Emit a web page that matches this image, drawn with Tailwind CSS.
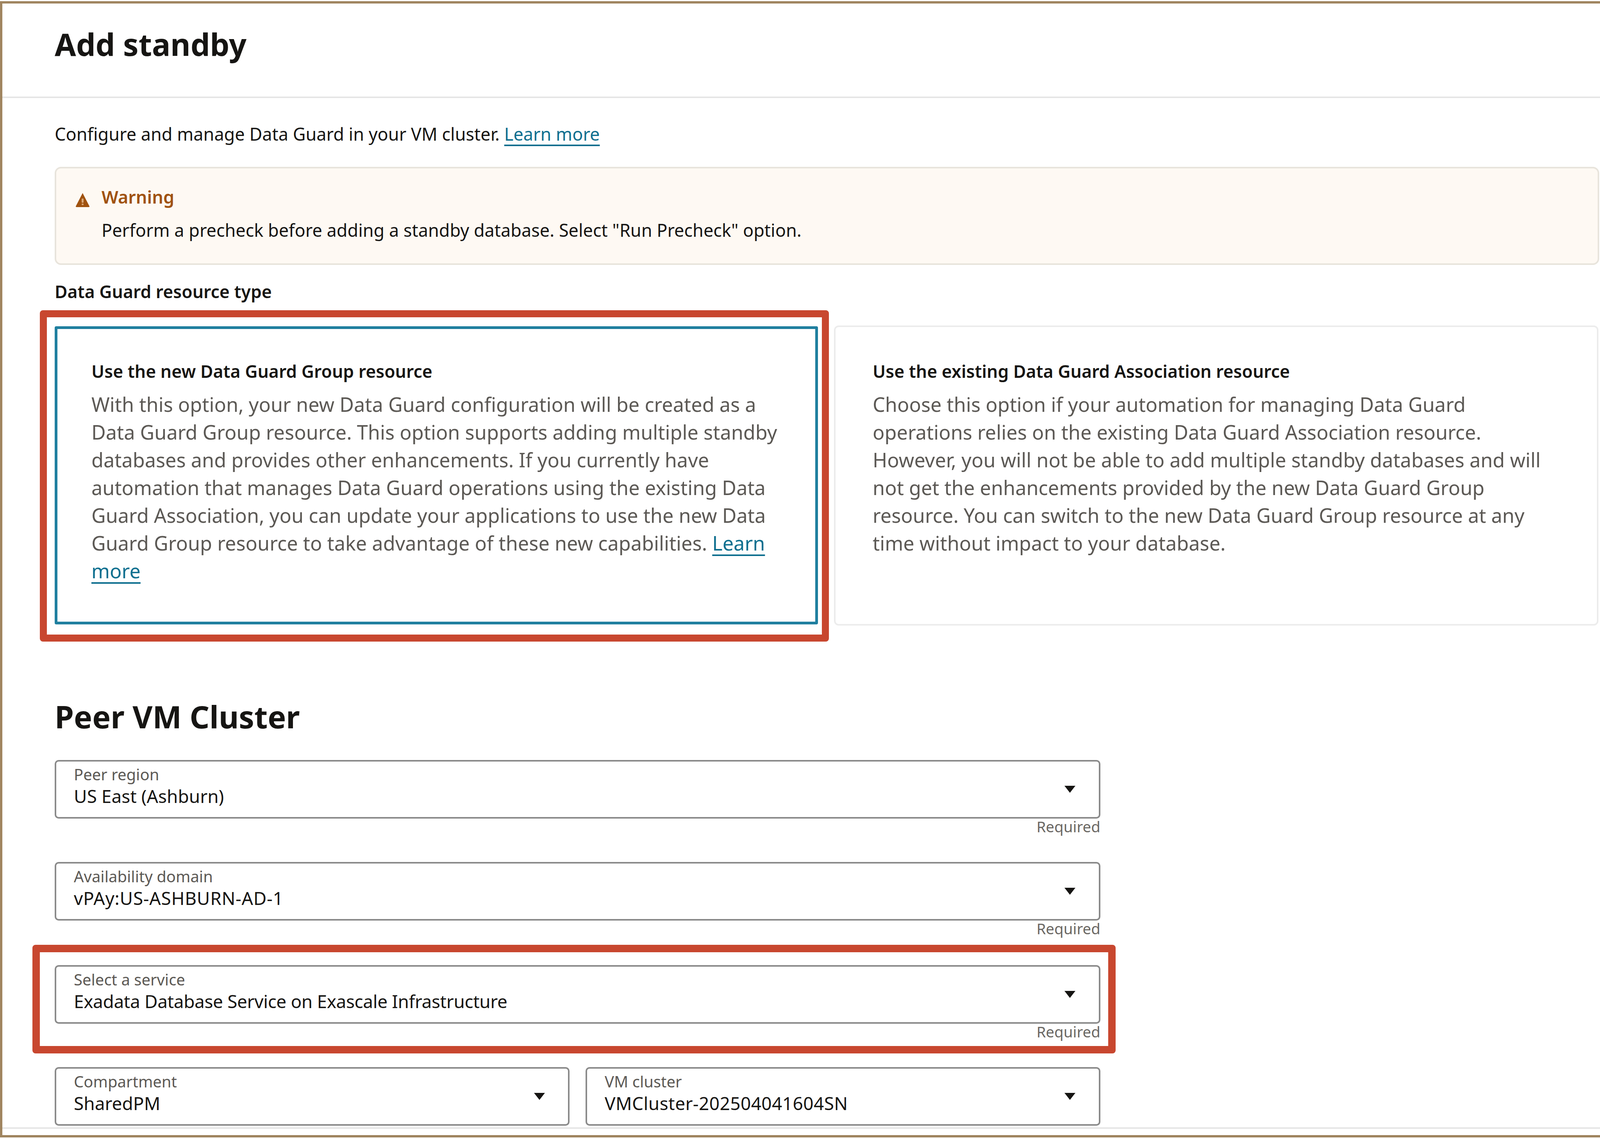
<!DOCTYPE html>
<html lang="en">
<head>
<meta charset="utf-8">
<title>Add standby</title>
<script src="https://cdn.jsdelivr.net/npm/@tailwindcss/browser@4"></script>
</head>
<body class="m-0 bg-white">
<div class="relative w-[4134px] h-[2915px] overflow-hidden bg-white font-['Noto_Sans',sans-serif] text-[#161513]">
  <div class="mt-[3px] w-[4130px] h-[2908px] border-[6px] border-[#a08560] overflow-hidden">
    <header class="h-[242px] pl-[134px] pt-[54px] border-b-[4px] border-[#e6e6e6]">
      <h1 class="text-[79px] leading-[100px] font-bold">Add standby</h1>
    </header>
    <main class="pl-[134px] pr-[30px]">
      <p class="mt-[62px] text-[45px] leading-[60px]">Configure and manage Data Guard in your VM cluster. <a class="text-[#0e6f8f] underline decoration-[4px] underline-offset-[10px]">Learn more</a></p>

      <div class="mt-[54px] h-[251px] w-[3954px] flex gap-[30px] pl-[49px] pt-[43px] border-[4px] border-[#e8e4dc] rounded-[16px] bg-[#fef9f3]">
        <svg class="mt-[19px] w-[37px] h-[37px] shrink-0" viewBox="0 0 37 37"><path d="M18.5 1 L36 35 Q36.5 37 34 37 L3 37 Q0.5 37 1 35 Z" fill="#a0520f"/><rect x="16" y="15" width="5" height="11" rx="2" fill="#d9a878"/><rect x="16" y="28" width="5" height="4" rx="1.5" fill="#d9a878"/></svg>
        <div>
          <div class="text-[45px] leading-[60px] font-semibold text-[#a0520f]">Warning</div>
          <div class="mt-[25px] text-[45px] leading-[60px]">Perform a precheck before adding a standby database. Select "Run Precheck" option.</div>
        </div>
      </div>

      <div class="mt-[38px] text-[44.5px] leading-[60px] font-semibold">Data Guard resource type</div>

      <div class="mt-[57px] flex items-start gap-[41px]">
        <div class="mt-[2px] h-[763px] w-[1954px] border-[7px] border-[#1f7f9f] rounded-[4px] pl-[87px] pt-[78px]">
          <div class="text-[44.5px] leading-[60px] font-semibold">Use the new Data Guard Group resource</div>
          <p class="mt-[19px] text-[50.4px] leading-[71px] text-[#5c5955] whitespace-nowrap">With this option, your new Data Guard configuration will be created as a<br>Data Guard Group resource. This option supports adding multiple standby<br>databases and provides other enhancements. If you currently have<br>automation that manages Data Guard operations using the existing Data<br>Guard Association, you can update your applications to use the new Data<br>Guard Group resource to take advantage of these new capabilities. <a class="text-[#0e6f8f] underline decoration-[4px] underline-offset-[10px]">Learn<br>more</a></p>
        </div>
        <div class="h-[768px] w-[1957px] border-[4px] border-[#ececec] rounded-[12px] pl-[95px] pt-[83px]">
          <div class="text-[44.5px] leading-[60px] font-semibold">Use the existing Data Guard Association resource</div>
          <p class="mt-[19px] text-[50.4px] leading-[71px] text-[#5c5955] whitespace-nowrap">Choose this option if your automation for managing Data Guard<br>operations relies on the existing Data Guard Association resource.<br>However, you will not be able to add multiple standby databases and will<br>not get the enhancements provided by the new Data Guard Group<br>resource. You can switch to the new Data Guard Group resource at any<br>time without impact to your database.</p>
        </div>
      </div>

      <h2 class="mt-[183px] text-[79px] leading-[100px] font-bold">Peer VM Cluster</h2>

      <div class="mt-[61px] w-[2677px]">
        <div class="h-[150px] flex items-center justify-between border-[4px] border-[#8a8a8a] rounded-[10px] pl-[45px] pr-[60px]">
          <div class="self-start pt-[8px]">
            <div class="text-[40px] leading-[50px] text-[#5c5955]">Peer region</div>
            <div class="text-[46px] leading-[60px]">US East (Ashburn)</div>
          </div>
          <svg class="w-[28px] h-[18px]" viewBox="0 0 28 18"><path d="M0 0 H28 L14 18 Z" fill="#161513"/></svg>
        </div>
        <div class="h-[40px] text-right text-[38.5px] leading-[40px] text-[#6b6864]">Required</div>

        <div class="mt-[71px] h-[150px] flex items-center justify-between border-[4px] border-[#8a8a8a] rounded-[10px] pl-[45px] pr-[60px]">
          <div class="self-start pt-[8px]">
            <div class="text-[40px] leading-[50px] text-[#5c5955]">Availability domain</div>
            <div class="text-[46px] leading-[60px] tracking-[0.7px]">vPAy:US-ASHBURN-AD-1</div>
          </div>
          <svg class="w-[28px] h-[18px]" viewBox="0 0 28 18"><path d="M0 0 H28 L14 18 Z" fill="#161513"/></svg>
        </div>
        <div class="h-[40px] text-right text-[38.5px] leading-[40px] text-[#6b6864]">Required</div>

        <div class="mt-[74px] h-[150px] flex items-center justify-between border-[4px] border-[#8a8a8a] rounded-[10px] pl-[45px] pr-[60px]">
          <div class="self-start pt-[8px]">
            <div class="text-[40px] leading-[50px] text-[#5c5955]">Select a service</div>
            <div class="text-[46px] leading-[60px] tracking-[-0.4px]">Exadata Database Service on Exascale Infrastructure</div>
          </div>
          <svg class="w-[28px] h-[18px]" viewBox="0 0 28 18"><path d="M0 0 H28 L14 18 Z" fill="#161513"/></svg>
        </div>
        <div class="h-[40px] text-right text-[38.5px] leading-[40px] text-[#6b6864]">Required</div>

        <div class="mt-[71px] flex gap-[41px]">
          <div class="h-[150px] w-[1318px] flex items-center justify-between border-[4px] border-[#8a8a8a] rounded-[10px] pl-[45px] pr-[59px]">
            <div class="self-start pt-[8px]">
              <div class="text-[40px] leading-[50px] text-[#5c5955]">Compartment</div>
              <div class="text-[46px] leading-[60px]">SharedPM</div>
            </div>
            <svg class="w-[28px] h-[18px]" viewBox="0 0 28 18"><path d="M0 0 H28 L14 18 Z" fill="#161513"/></svg>
          </div>
          <div class="h-[150px] w-[1318px] flex items-center justify-between border-[4px] border-[#8a8a8a] rounded-[10px] pl-[45px] pr-[60px]">
            <div class="self-start pt-[8px]">
              <div class="text-[40px] leading-[50px] text-[#5c5955]">VM cluster</div>
              <div class="text-[46px] leading-[60px] tracking-[0.4px]">VMCluster-202504041604SN</div>
            </div>
            <svg class="w-[28px] h-[18px]" viewBox="0 0 28 18"><path d="M0 0 H28 L14 18 Z" fill="#161513"/></svg>
          </div>
        </div>
      </div>
    </main>
    <div class="mt-[4px] border-t-[4px] border-[#e6e6e6]"></div>
  </div>

  <div class="absolute left-[102px] top-[794px] w-[2020px] h-[848px] border-[18px] border-[#c8472f] rounded-[8px] pointer-events-none"></div>
  <div class="absolute left-[83px] top-[2418px] w-[2773px] h-[278px] border-[19px] border-[#c8472f] rounded-[8px] pointer-events-none"></div>
</div>
</body>
</html>
